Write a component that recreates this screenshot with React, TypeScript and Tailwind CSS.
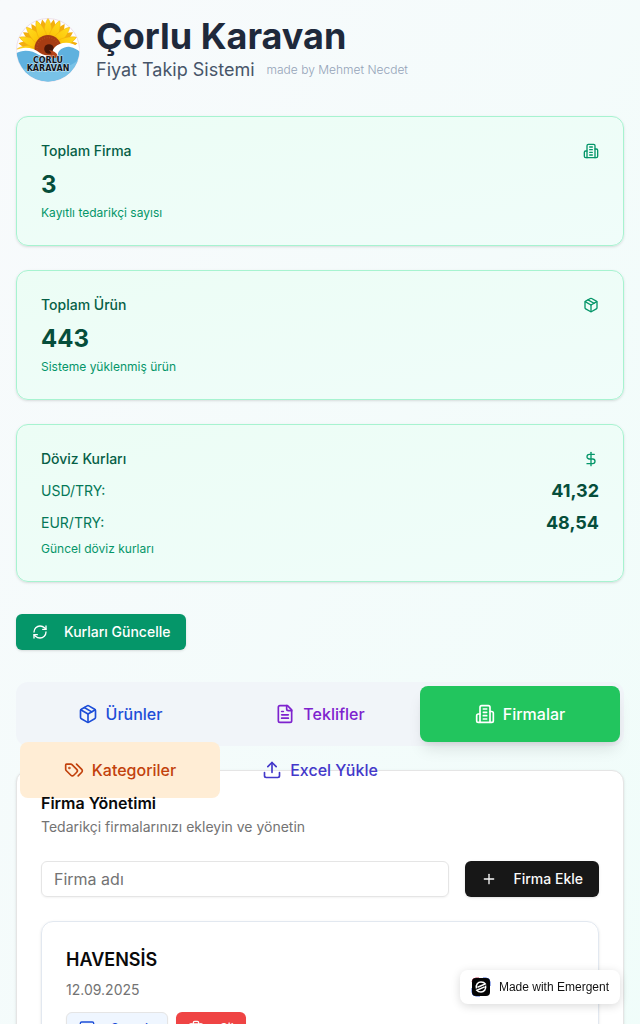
import type { ComponentType, ReactNode } from "react";
import { DollarSign, Monitor, Package, Plus, RefreshCw, Trash2, Upload } from "lucide-react";

type IconProps = { className?: string };
type Icon = ComponentType<IconProps>;

function Outline({ className, children }: IconProps & { children: ReactNode }) {
  return (
    <svg
      viewBox="0 0 24 24"
      fill="none"
      stroke="currentColor"
      strokeWidth="2"
      strokeLinecap="round"
      strokeLinejoin="round"
      className={className}
      aria-hidden="true"
    >
      {children}
    </svg>
  );
}

function Building({ className }: IconProps) {
  return (
    <Outline className={className}>
      <path d="M6 22V4a2 2 0 0 1 2-2h8a2 2 0 0 1 2 2v18Z" />
      <path d="M6 12H4a2 2 0 0 0-2 2v6a2 2 0 0 0 2 2h2" />
      <path d="M18 9h2a2 2 0 0 1 2 2v9a2 2 0 0 1-2 2h-2" />
      <path d="M10 6h4" />
      <path d="M10 10h4" />
      <path d="M10 14h4" />
      <path d="M10 18h4" />
    </Outline>
  );
}

function Document({ className }: IconProps) {
  return (
    <Outline className={className}>
      <path d="M15 2H6a2 2 0 0 0-2 2v16a2 2 0 0 0 2 2h12a2 2 0 0 0 2-2V7Z" />
      <path d="M14 2v4a2 2 0 0 0 2 2h4" />
      <path d="M10 9H8" />
      <path d="M16 13H8" />
      <path d="M16 17H8" />
    </Outline>
  );
}

function Labels({ className }: IconProps) {
  return (
    <Outline className={className}>
      <path d="m15 5 6.3 6.3a2.4 2.4 0 0 1 0 3.4L17 19" />
      <path d="M9.586 5.586A2 2 0 0 0 8.172 5H3a1 1 0 0 0-1 1v5.172a2 2 0 0 0 .586 1.414L8.290 18.290a2.426 2.426 0 0 0 3.420 0l3.580-3.580a2.426 2.426 0 0 0 0-3.420z" />
      <circle cx="6.500" cy="9.500" r=".5" fill="currentColor" />
    </Outline>
  );
}

const outerPetals = Array.from({ length: 16 }, (_, i) => i * 22.5);
const innerPetals = Array.from({ length: 16 }, (_, i) => i * 22.5 + 11.25);

function Logo() {
  return (
    <svg viewBox="0 0 64 64" className="size-16 shrink-0" role="img" aria-label="Çorlu Karavan">
      <defs>
        <clipPath id="disc">
          <circle cx="32" cy="32" r="31.5" />
        </clipPath>
        <linearGradient id="petal" x1="0" y1="0" x2="0" y2="1">
          <stop offset="0" stopColor="#ffdc1f" />
          <stop offset="0.5" stopColor="#fdc90c" />
          <stop offset="1" stopColor="#e8920c" />
        </linearGradient>
      </defs>
      <circle cx="32" cy="32" r="31.5" fill="#fff" stroke="#eddfea" strokeWidth="1" />
      <g clipPath="url(#disc)">
        {innerPetals.map((a) => (
          <path key={a} d="M32 30C25 22 27 9 32 1C37 9 39 22 32 30Z" fill="#f3ae0e" transform={`rotate(${a} 32 31)`} />
        ))}
        {outerPetals.map((a) => (
          <path
            key={a}
            d="M32 30C25.500 21 27 8 32 0C37 8 38.500 21 32 30Z"
            fill="url(#petal)"
            stroke="#eea40e"
            strokeWidth="0.4"
            transform={`rotate(${a} 32 31)`}
          />
        ))}
        <circle cx="32" cy="30.500" r="13.500" fill="#a63c12" />
        <circle cx="32" cy="30.500" r="11" fill="none" stroke="#b9491a" strokeWidth="1.500" strokeDasharray="1 1.500" />
        <circle cx="33" cy="31" r="4.800" fill="#4a1606" />
        <path d="M-1 33C6 28 17 29 24 35C29 38 34 38 38 37C36 35 36 32 39 29C44 24 55 22 65 31V66H-1Z" fill="#fff" />
        <path d="M-1 36C6 31 16 32 23 37C30 41 40 41 42 37C41 33 48 28 54 29C59 30 62 32 65 35V66H-1Z" fill="#5fb1de" />
        <path d="M-1 48C12 56 28 44 40 48C50 51 58 46 65 40V66H-1Z" fill="#78c2e7" />
        <path d="M33 32C38 33 43 36 41 39C39 41 35 40 32 38C37 38 37 36 33 32Z" fill="#b5431a" />
      </g>
      <g
        fill="#15161a"
        stroke="#fff"
        strokeWidth="1"
        strokeOpacity="0.6"
        paintOrder="stroke"
        textAnchor="middle"
        className="font-['DejaVu_Sans',sans-serif] text-[8px] font-bold"
      >
        <text x="32" y="45">ÇORLU</text>
        <text x="32" y="53">KARAVAN</text>
      </g>
    </svg>
  );
}

function StatCard({ title, icon: Glyph, note, children }: { title: string; icon: Icon; note: string; children: ReactNode }) {
  return (
    <section className="rounded-xl border border-[#a7f3d0] bg-linear-to-br from-[#ecfdf5] to-[#f0fdfa] p-6 shadow-sm">
      <div className="flex items-center justify-between pb-2">
        <h2 className="text-sm font-medium text-[#065f46]">{title}</h2>
        <Glyph className="size-4 text-[#059669]" />
      </div>
      {children}
      <p className="text-xs text-[#059669]">{note}</p>
    </section>
  );
}

function Rate({ pair, value }: { pair: string; value: string }) {
  return (
    <div className="flex items-center justify-between">
      <span className="text-sm text-[#047857]">{pair}</span>
      <span className="text-lg font-bold text-[#064e3b]">{value}</span>
    </div>
  );
}

const tabs: { label: string; icon: Icon; look: string; active?: boolean }[] = [
  { label: "Ürünler", icon: Package, look: "text-[#1d4ed8]" },
  { label: "Teklifler", icon: Document, look: "text-[#7e22ce]" },
  { label: "Firmalar", icon: Building, look: "bg-[#22c55e] text-white shadow-lg", active: true },
  { label: "Kategoriler", icon: Labels, look: "bg-[#ffedd5] text-[#c2410c]" },
  { label: "Excel Yükle", icon: Upload, look: "text-[#4338ca]" },
];

export default function App() {
  return (
    <div className="min-h-screen bg-linear-to-br from-[#f8fafc] to-[#f0fdfa] p-4 font-['Inter',sans-serif] text-[#0a0a0a]">
      <header className="mb-8 flex items-center gap-4">
        <Logo />
        <div>
          <h1 className="text-4xl font-bold text-[#1e293b]">Çorlu Karavan</h1>
          <div className="flex items-center gap-3">
            <p className="text-lg text-[#475569]">Fiyat Takip Sistemi</p>
            <span className="text-xs font-light text-[#94a3b8]">made by Mehmet Necdet</span>
          </div>
        </div>
      </header>

      <div className="mb-8 grid gap-6">
        <StatCard title="Toplam Firma" icon={Building} note="Kayıtlı tedarikçi sayısı">
          <div className="mb-1 text-2xl font-bold text-[#064e3b]">3</div>
        </StatCard>
        <StatCard title="Toplam Ürün" icon={Package} note="Sisteme yüklenmiş ürün">
          <div className="mb-1 text-2xl font-bold text-[#064e3b]">443</div>
        </StatCard>
        <StatCard title="Döviz Kurları" icon={DollarSign} note="Güncel döviz kurları">
          <div className="mb-1 space-y-1">
            <Rate pair="USD/TRY:" value="41,32" />
            <Rate pair="EUR/TRY:" value="48,54" />
          </div>
        </StatCard>
      </div>

      <div className="mb-8 flex">
        <button
          type="button"
          className="flex h-9 items-center gap-4 rounded-md bg-[#059669] px-4 text-sm font-medium text-white shadow-sm"
        >
          <RefreshCw className="size-4" />
          Kurları Güncelle
        </button>
      </div>

      <div role="tablist" className="mb-6 grid h-16 grid-cols-3 rounded-xl bg-[#f1f5f9] p-1">
        {tabs.map(({ label, icon: Glyph, look, active }) => (
          <button
            key={label}
            type="button"
            role="tab"
            aria-selected={!!active}
            className={`flex h-14 items-center justify-center gap-2 rounded-lg text-base font-medium ${look}`}
          >
            <Glyph className="size-5" />
            {label}
          </button>
        ))}
      </div>

      <main className="rounded-xl border border-[#e5e5e5] bg-white p-6 shadow-sm">
        <div className="flex flex-col gap-1.5">
          <h2 className="text-base leading-4 font-semibold">Firma Yönetimi</h2>
          <p className="text-sm text-[#737373]">Tedarikçi firmalarınızı ekleyin ve yönetin</p>
        </div>
        <form className="mt-6 flex gap-4">
          <input
            type="text"
            aria-label="Firma adı"
            placeholder="Firma adı"
            className="h-9 min-w-0 flex-1 rounded-md border border-[#e5e5e5] px-3 text-base shadow-xs placeholder:text-[#737373]"
          />
          <button
            type="button"
            className="flex h-9 items-center gap-4 rounded-md bg-[#171717] px-4 text-sm font-medium text-[#fafafa] shadow-sm"
          >
            <Plus className="size-4" />
            Firma Ekle
          </button>
        </form>
        <article className="mt-6 rounded-xl border border-[#e2e8f0] p-6 shadow-sm">
          <h3 className="text-lg font-semibold">HAVENSİS</h3>
          <p className="mt-1.5 text-sm text-[#737373]">12.09.2025</p>
          <div className="mt-3 flex gap-2">
            <button
              type="button"
              className="flex h-8 items-center gap-4 rounded-md border border-[#e5e5e5] bg-[#eff6ff] px-3 text-xs font-medium text-[#1d4ed8] shadow-xs"
            >
              <Monitor className="size-4" />
              Sorgula
            </button>
            <button
              type="button"
              className="flex h-8 items-center gap-4 rounded-md bg-[#ef4444] px-3 text-xs font-medium text-[#fafafa] shadow-xs"
            >
              <Trash2 className="size-4" />
              Sil
            </button>
          </div>
        </article>
      </main>

      <a
        href="#emergent"
        className="fixed right-5 bottom-5 flex items-center gap-2 rounded-lg bg-white px-[11px] py-2 font-['Liberation_Sans',sans-serif] text-xs leading-[18px] text-[#111] shadow-[0_2px_10px_rgba(0,0,0,0.15)]"
      >
        <svg viewBox="0 0 20 20" className="-my-1 size-5" aria-hidden="true">
          <path d="M1 5a4 4 0 0 1 4-4h3" fill="none" stroke="#c0395a" />
          <path d="M12 1h3a4 4 0 0 1 4 4v4M1 11v4a4 4 0 0 0 4 4h4" fill="none" stroke="#3f63d8" />
          <rect x="1" y="1" width="18" height="18" rx="4" fill="#050505" />
          <path d="M5.500 11.500C4.500 7.500 7 5 10 5C12 5 13.500 5.800 14.300 7L6.500 10.200" fill="none" stroke="#fff" strokeWidth="1.500" />
          <path d="M14.600 8.600C15.300 12.500 13 15 10 15C8 15 6.700 14.300 5.800 13.200L13.600 9.900" fill="none" stroke="#fff" strokeWidth="1.500" />
        </svg>
        Made with Emergent
      </a>
    </div>
  );
}
